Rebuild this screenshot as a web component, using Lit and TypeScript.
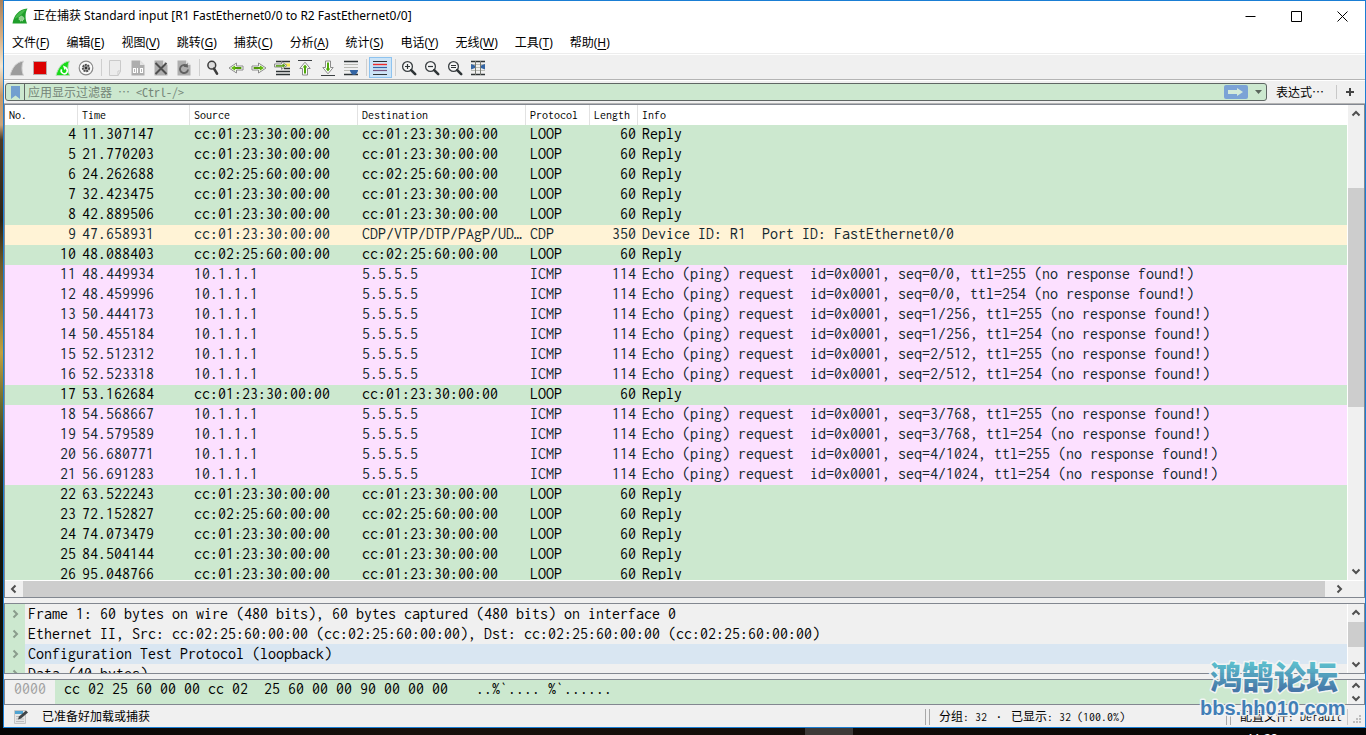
import { LitElement, html, svg, css, nothing } from "lit";

type Kind = "loop" | "cdp" | "icmp";
interface Packet {
  no: number;
  time: string;
  src: string;
  dst: string;
  proto: string;
  len: number;
  info: string;
  kind: Kind;
}

const R1 = "cc:01:23:30:00:00";
const R2 = "cc:02:25:60:00:00";

const loop = (no: number, time: string, mac: string): Packet => ({
  no, time, src: mac, dst: mac, proto: "LOOP", len: 60, info: "Reply", kind: "loop",
});
const ping = (no: number, time: string, seq: string, ttl: number): Packet => ({
  no, time, src: "10.1.1.1", dst: "5.5.5.5", proto: "ICMP", len: 114,
  info: `Echo (ping) request  id=0x0001, seq=${seq}, ttl=${ttl} (no response found!)`, kind: "icmp",
});

const PACKETS: Packet[] = [
  loop(4, "11.307147", R1),
  loop(5, "21.770203", R1),
  loop(6, "24.262688", R2),
  loop(7, "32.423475", R1),
  loop(8, "42.889506", R1),
  { no: 9, time: "47.658931", src: R1, dst: "CDP/VTP/DTP/PAgP/UDLD", proto: "CDP", len: 350, info: "Device ID: R1  Port ID: FastEthernet0/0", kind: "cdp" },
  loop(10, "48.088403", R2),
  ping(11, "48.449934", "0/0", 255),
  ping(12, "48.459996", "0/0", 254),
  ping(13, "50.444173", "1/256", 255),
  ping(14, "50.455184", "1/256", 254),
  ping(15, "52.512312", "2/512", 255),
  ping(16, "52.523318", "2/512", 254),
  loop(17, "53.162684", R1),
  ping(18, "54.568667", "3/768", 255),
  ping(19, "54.579589", "3/768", 254),
  ping(20, "56.680771", "4/1024", 255),
  ping(21, "56.691283", "4/1024", 254),
  loop(22, "63.522243", R1),
  loop(23, "72.152827", R2),
  loop(24, "74.073479", R1),
  loop(25, "84.504144", R1),
  loop(26, "95.048766", R1),
];

const DETAILS = [
  { text: "Frame 1: 60 bytes on wire (480 bits), 60 bytes captured (480 bits) on interface 0", selected: false },
  { text: "Ethernet II, Src: cc:02:25:60:00:00 (cc:02:25:60:00:00), Dst: cc:02:25:60:00:00 (cc:02:25:60:00:00)", selected: false },
  { text: "Configuration Test Protocol (loopback)", selected: true },
  { text: "Data (40 bytes)", selected: false },
];

const MENUS: [string, string][] = [
  ["文件", "F"], ["编辑", "E"], ["视图", "V"], ["跳转", "G"], ["捕获", "C"], ["分析", "A"],
  ["统计", "S"], ["电话", "Y"], ["无线", "W"], ["工具", "T"], ["帮助", "H"],
];

const arrow = svg`<path d="M1 6H7.5V3L15 8L7.5 13V10H1Z" fill="#fff" stroke="#8b8b8b" stroke-linejoin="round"/><path d="M2.6 8H10" stroke="#4e9a06" stroke-width="2"/><path d="M8.8 5.2L13 8L8.8 10.8Z" fill="#62b811"/>`;
const page = svg`<path d="M1.5 .5H10L14.5 5V15.5H1.5Z" fill="#aeaeae"/><path d="M10 .5V5H14.5Z" fill="#e4e4e4"/>`;
const glass = (mark: unknown) => svg`<circle cx="6.5" cy="6.5" r="4.9" fill="#f6f6f6" stroke="#3a3f42" stroke-width="1.3"/>
  <path d="M10.2 10.2L14.2 14.2" stroke="#2e3436" stroke-width="2.6" stroke-linecap="round"/>${mark}`;

const ICONS: Record<string, unknown> = {
  start: svg`<path d="M1 15.5C3 8 7 2 14.5 1C12.5 5 12.5 11 14.5 15.5Z" fill="#9c9c9c" stroke="#d4d4d4"/>`,
  stop: svg`<rect x="1.5" y="1.5" width="13" height="13" fill="#dc0000" stroke="#b9a9a9"/>`,
  restart: svg`<path d="M1 15.5C3 8 7 2 14.5 1C12.5 5 12.5 11 14.5 15.5Z" fill="#17dc17" stroke="#b4dcb4"/>
    <path d="M10.8 8.2A3 3 0 1 1 6.6 9.4" fill="none" stroke="#fff" stroke-width="1.6"/><path d="M8 5.6L12 7.2L9.4 10Z" fill="#fff"/>`,
  options: svg`<circle cx="8" cy="8" r="6.8" fill="#fafafa" stroke="#8a8a8a" stroke-width="1.2"/><circle cx="8" cy="8" r="3.2" fill="#bbb" stroke="#4d4d4d" stroke-width="1.9" stroke-dasharray="2 .7"/><circle cx="8" cy="8" r="1.4" fill="#333"/>`,
  open: svg`<path d="M2.5 .5H13.5V11L11 15.5H2.5Z" fill="#ececec" stroke="#cacaca"/><path d="M13.5 11H11V15.5Z" fill="#fff" stroke="#cacaca"/>`,
  save: svg`${page}<path d="M3.5 8.5H5.5V12.5H3.5ZM7.5 8V13M10.5 8.5H12.5V12.5H10.5Z" fill="none" stroke="#fff" stroke-width="1.1"/>`,
  close: svg`${page}<path d="M2.5 3L13.5 14M13.5 3L2.5 14" stroke="#4e4e4e" stroke-width="2"/>`,
  reload: svg`${page}<path d="M10.6 6A4 4 0 1 0 12 9.5" fill="none" stroke="#626262" stroke-width="1.9"/><path d="M7.5 6.8L12 7.6L11.6 3Z" fill="#626262"/>`,
  find: svg`<circle cx="6.8" cy="5.2" r="3.9" fill="#dcdcdc" stroke="#3c3c3c" stroke-width="1.5"/><path d="M9 8.6L12 13.6" stroke="#3c3c3c" stroke-width="2.6" stroke-linecap="round"/>`,
  back: svg`<g transform="matrix(-1 0 0 1 16 0)">${arrow}</g>`,
  forward: arrow,
  goto: svg`<path d="M2 1.5H16M2 11.5H16M2 14.5H16M10 8.5H16" stroke="#2e3436" stroke-width="1.3"/><path d="M10 3.5H16V6.5H10Z" fill="#fce94f"/>
    <path d="M.5 4H7.5V1.6L13 5.5L7.5 9.4V7H.5Z" fill="#fff" stroke="#8b8b8b"/><path d="M2 5.5H8.8V4L11.2 5.5L8.8 7.2V6.3H2Z" fill="#4e9a06" stroke="#4e9a06" stroke-width=".6"/>`,
  first: svg`<path d="M1 .5H15" stroke="#3a3f42"/><path d="M5.5 15V8.5H2.8L8 2.2L13.2 8.5H10.5V15Z" fill="#fff" stroke="#8b8b8b"/><path d="M7 13.5V7.4H5.6L8 4.4L10.4 7.4H9V13.5Z" fill="#4fa80a"/>`,
  last: svg`<path d="M1 15.5H15" stroke="#3a3f42"/><path d="M5.5 1V7.5H2.8L8 13.8L13.2 7.5H10.5V1Z" fill="#fff" stroke="#8b8b8b"/><path d="M7 2.5V8.6H5.6L8 11.6L10.4 8.6H9V2.5Z" fill="#4fa80a"/>`,
  autoscroll: svg`<path d="M1 1.5H15M1 14.5H15" stroke="#2e3436" stroke-width="1.3"/><path d="M1 4.5H15M1 7.5H15M1 10.5H9" stroke="#b9bab4"/><path d="M7 10H15C15 12.5 13 14.8 11 14.8S7 12.5 7 10Z" fill="#3465a4"/>`,
  colorize: svg`<path d="M1 1.5H15M1 14.5H15" stroke="#2e3436" stroke-width="1.2"/><path d="M1 4.5H15" stroke="#ef2929" stroke-width="1.4"/><path d="M1 7.5H15" stroke="#3465a4" stroke-width="1.2"/><path d="M1 10.5H15" stroke="#75507b" stroke-width="1.2"/>`,
  zoomIn: glass(svg`<path d="M4 6.5H9M6.5 4V9" stroke="#2e3436" stroke-width="1.2"/>`),
  zoomOut: glass(svg`<path d="M4 6.5H9" stroke="#2e3436" stroke-width="1.2"/>`),
  zoomReset: glass(svg`<path d="M4 5.5H9M4 7.5H9" stroke="#2e3436"/>`),
  resize: svg`<path d="M1 1.5H15M1 14.5H15" stroke="#2e3436" stroke-width="1.3"/><path d="M1 7.5H15M1 10.5H15M1 4.5H15" stroke="#babdb6"/><path d="M5.5 1V15M10.5 1V15" stroke="#777972"/><path d="M1 4V9.5L5 8V5.5ZM15 4V9.5L11 8V5.5Z" fill="#3465a4"/>`,
};

const TOOLBAR: [string, string][][] = [
  [["start", "开始捕获"], ["stop", "停止捕获"], ["restart", "重新开始"], ["options", "捕获选项"]],
  [["open", "打开"], ["save", "保存"], ["close", "关闭"], ["reload", "重新加载"]],
  [["find", "查找"], ["back", "后退"], ["forward", "前进"], ["goto", "转到分组"], ["first", "首个分组"], ["last", "最新分组"], ["autoscroll", "自动滚动"]],
  [["colorize", "着色"]],
  [["zoomIn", "放大"], ["zoomOut", "缩小"], ["zoomReset", "普通大小"], ["resize", "调整列宽"]],
];

const CHEVRONS: Record<string, string> = {
  up: "M1.5 6.5L5 3L8.5 6.5",
  down: "M1.5 3.5L5 7L8.5 3.5",
  left: "M6.5 1.5L3 5L6.5 8.5",
  right: "M3.5 1.5L7 5L3.5 8.5",
};
const chevron = (dir: string) => html`<svg class="chevron" viewBox="0 0 10 10" aria-hidden="true"><path d=${CHEVRONS[dir]}></path></svg>`;

class ScrollTrack extends LitElement {
  static properties = {
    horizontal: { type: Boolean, reflect: true },
    before: { type: Number },
    thumb: { type: Number },
    after: { type: Number },
  };
  declare horizontal: boolean;
  declare before: number;
  declare thumb: number;
  declare after: number;

  static styles = css`
    :host { display: flex; flex-direction: column; width: 16px; background: #f0f0f0; }
    :host([horizontal]) { flex-direction: row; width: auto; height: 16px; }
    button { flex: 0 1 18px; min-height: 0; min-width: 0; padding: 0; border: 0; background: none; display: flex; align-items: center; justify-content: center; overflow: hidden; }
    .thumb { background: #cdcdcd; min-height: 0; }
    .chevron { width: 10px; height: 10px; flex: none; }
    .chevron path { fill: none; stroke: #505050; stroke-width: 2; }
  `;

  render() {
    return html`
      <button aria-label=${this.horizontal ? "向左" : "向上"}>${chevron(this.horizontal ? "left" : "up")}</button>
      <div style="flex:${this.before} 1 0"></div>
      <div class="thumb" style="flex:${this.thumb} 1 0"></div>
      <div style="flex:${this.after} 1 0"></div>
      <button aria-label=${this.horizontal ? "向右" : "向下"}>${chevron(this.horizontal ? "right" : "down")}</button>
    `;
  }
}
customElements.define("scroll-track", ScrollTrack);

class AppRoot extends LitElement {
  static styles = css`
    :host {
      --mono: Inconsolata, "Noto Sans Mono CJK SC", "Liberation Mono", monospace;
      --ui: "Noto Sans", "Noto Sans CJK SC", sans-serif;
      --fixed: Inconsolata, "Noto Sans CJK SC", sans-serif;
      --green: #cce8cf;
      --line: #828790;
      display: block;
      height: 100vh;
      overflow: hidden;
      font: 12px/16px var(--ui);
      color: #000;
    }
    * { box-sizing: border-box; }
    button { font: inherit; color: inherit; border: 0; padding: 0; background: none; }
    svg { display: block; }

    .desktop {
      position: relative;
      height: 100%;
      display: flex;
      flex-direction: column;
      padding-left: 3px;
      background: linear-gradient(#a9805a, #d9b184 5%, #f3e6d2 9%, #c4986a 13%, #c9a57d 17%, #4a3b28 19%, #2b2418 30%, #6d5a2a 36%, #8c7a35 42%, #c2a040 48%, #6b6b30 55%, #34391c 62%, #15180d 72%, #0a0a07);
    }
    .window {
      flex: 1;
      min-height: 0;
      display: flex;
      flex-direction: column;
      border: 1px solid #1a7ed4;
      background: #f0f0f0;
    }
    .taskbar { height: 7px; overflow: hidden; display: flex; margin-left: -3px; background: linear-gradient(90deg, #050505, #17110c 30%, #120d09 60%, #050505); }
    .taskbar .gap { flex: 805; }
    .taskbar .active { flex: 48; background: #3d3a38; }
    .taskbar .rest { flex: 394; }
    .taskbar .clock { flex: 119; padding-top: 3px; color: #fff; }

    .titlebar { display: flex; align-items: center; height: 30px; background: #fff; padding-left: 8px; }
    .titlebar h1 { flex: 1; margin: 0 0 0 5px; font: inherit; }
    .titlebar .logo { width: 16px; height: 16px; }
    .titlebar button { width: 46px; height: 30px; display: flex; align-items: center; justify-content: center; }
    .titlebar button svg { width: 11px; height: 11px; fill: none; stroke: #000; }

    .menubar { display: flex; gap: 17px; height: 24px; padding: 3px 8px 0; background: #fff; border-bottom: 1px solid #fff; box-shadow: inset 0 -1px #ededed; align-items: flex-start; }
    .menubar button { line-height: 18px; text-align: left; white-space: nowrap; }
    .menubar u { text-underline-offset: 2px; }

    .toolbar { display: flex; align-items: center; height: 25px; padding: 0 2px; border-bottom: 1px solid #b4b4b4; }
    .toolbar button { width: 23px; height: 21px; padding: 1px 1px 0 0; display: flex; align-items: center; justify-content: center; }
    .toolbar button.on { background: #cce4f7; box-shadow: inset 0 0 0 1px #8ec3ef; }
    .toolbar svg { width: 16px; height: 16px; overflow: visible; }
    .toolbar .sep { width: 6px; display: flex; justify-content: center; }
    .toolbar .sep::before { content: ""; width: 1px; height: 17px; background: #cfcfcf; }

    .filterbar { display: flex; align-items: center; height: 24px; padding: 0 10px 0 1px; border-top: 1px solid #fff; border-bottom: 1px solid #b4b4b4; font-family: "Noto Sans Mono CJK SC", "Noto Sans CJK SC", sans-serif; }
    .field { flex: 1; display: flex; align-items: center; height: 18px; border: 1px solid #5f6664; border-radius: 3px; background: var(--green); overflow: hidden; }
    .field .mark { width: 19px; height: 16px; display: flex; align-items: center; justify-content: center; border-right: 1px solid #5f6664; }
    .field input { flex: 1; min-width: 0; height: 16px; padding: 0 3px; border: 0; outline: 0; background: none; font: inherit; color: #000; }
    .field input::placeholder { color: #748577; opacity: 1; }
    .field .apply { width: 24px; height: 14px; border-radius: 2px; background: #7ba3d6; display: flex; align-items: center; justify-content: center; }
    .field .history { width: 18px; height: 16px; display: flex; align-items: center; justify-content: center; padding-left: 4px; }
    .expr { margin-left: 9px; }
    .bar { width: 1px; height: 14px; background: #c8c8c8; margin: 0 8px 0 12px; }

    .pane { border: 1px solid var(--line); background: #f0f0f0; display: flex; min-height: 0; }
    .pane .body { flex: 1; min-width: 0; min-height: 0; overflow: hidden; border-right: 1px solid #fff; }
    .packets { flex: 1; flex-direction: column; }
    .packets .top { flex: 1; display: flex; min-height: 0; }
    .packets .bottom { display: flex; border-top: 1px solid #fff; }
    .packets .bottom scroll-track { flex: 1; }
    .packets .corner { width: 16px; }
    .packets .body { background: #fff; }

    table { width: 100%; border-spacing: 0; table-layout: fixed; font: 16px/18px var(--mono); }
    th { height: 20px; padding: 0 3px 0 4px; font: 12px/20px var(--mono); text-align: left; box-shadow: inset -1px 0 #e2e2e2; }
    th:last-child { box-shadow: none; }
    td { height: 20px; padding: 0 2px 2px 4px; white-space: pre; overflow: hidden; text-overflow: ellipsis; }
    .num { text-align: right; }
    .c-no { width: 73px; } .c-time { width: 112px; } .c-addr { width: 168px; }
    .c-proto { width: 64px; } .c-len { width: 48px; }
    tr.loop { background: var(--green); }
    tr.cdp { background: #fff3d6; color: #12272e; }
    tr.icmp { background: #fce0ff; color: #12272e; }

    .details { height: 71px; margin-top: 5px; font: 16px/20px var(--mono); }
    .details ul { margin: 0; padding: 0; list-style: none; }
    .details li { display: flex; white-space: pre; }
    .details .twist { width: 20px; margin-right: 3px; background: var(--green); display: flex; align-items: center; justify-content: center; }
    .details li.sel { background: linear-gradient(90deg, var(--green) 20px, #d9e6f2 20px); }
    .details .chevron { width: 10px; height: 10px; }
    .details .chevron path { fill: none; stroke: #8a9c8c; stroke-width: 2; }

    .hex { height: 26px; margin-top: 5px; font: 16px/18px var(--mono); }
    .hex .body { display: flex; white-space: pre; background: var(--green); }
    .hex .offset { width: 50px; padding-left: 9px; background: #f0f0f0; color: #a0a0a0; }
    .hex .bytes { padding-left: 9px; }
    .hex .ascii { padding-left: 28px; }

    .status { display: flex; align-items: center; height: 22px; font-family: var(--fixed); white-space: pre; padding: 2px 0 0 10px; }
    .status .ready { flex: 1; display: flex; align-items: center; gap: 14px; }
    .status .group { padding-left: 9px; border-left: 1px solid #a8a8a8; margin-left: 3px; }
    .status .grip { height: 16px; border-left: 1px solid #a8a8a8; }
    .status .counts { width: 297px; }
    .status .profile { width: 118px; border-right: 1px solid #c8c8c8; }
    .status .dot { display: inline-block; width: 12px; text-align: center; font-weight: 700; }
    .status .size { margin: 4px 3px 0 5px; }

    .watermark { position: absolute; right: 14px; bottom: 12px; width: 156px; height: 66px; pointer-events: none; }
    .watermark .cn { font: 900 32px "Noto Sans CJK SC", sans-serif; }
    .watermark .url { font: 700 20px "Liberation Sans", sans-serif; }
  `;

  private separator() {
    return html`<span class="sep" role="separator"></span>`;
  }

  render() {
    return html`
      <div class="desktop">
        <main class="window">
          <header class="titlebar">
            <svg class="logo" viewBox="0 0 16 16" aria-hidden="true">
              <path d="M.5 15.5C1.5 8 6.5 1 15.5.5C12.8 5 13.2 11 15 15.5Z" fill="#1f9e2a"></path>
              <path d="M2.5 11C5 5.5 9 2 14 1.5C11 5 9 8 2.5 11Z" fill="#46bb4c"></path>
              <circle cx="9.4" cy="10.6" r="2.4" fill="#8fd08d" stroke="#d6f0d2" stroke-dasharray="1 .9"></circle>
            </svg>
            <h1>正在捕获 Standard input [R1 FastEthernet0/0 to R2 FastEthernet0/0]</h1>
            <button aria-label="最小化"><svg viewBox="0 0 11 11"><path d="M.5 5.5H10.5"></path></svg></button>
            <button aria-label="最大化"><svg viewBox="0 0 11 11"><path d="M.5.5H10.5V10.5H.5Z"></path></svg></button>
            <button aria-label="关闭"><svg viewBox="0 0 11 11"><path d="M.5.5L10.5 10.5M10.5.5L.5 10.5"></path></svg></button>
          </header>

          <nav class="menubar">
            ${MENUS.map(([label, key]) => html`<button>${label}(<u>${key}</u>)</button>`)}
          </nav>

          <div class="toolbar" role="toolbar">
            ${TOOLBAR.map((group, i) => html`
              ${i ? this.separator() : nothing}
              ${group.map(([id, label]) => html`
                <button class=${id === "colorize" ? "on" : ""} aria-label=${label}><svg viewBox="0 0 16 16">${ICONS[id]}</svg></button>`)}
            `)}
          </div>

          <div class="filterbar">
            <div class="field">
              <button class="mark" aria-label="书签"><svg width="9" height="13" viewBox="0 0 9 13"><path d="M0 0H9V13L4.5 9.5L0 13Z" fill="#729fcf"></path></svg></button>
              <input type="text" aria-label="显示过滤器" placeholder="应用显示过滤器 … &lt;Ctrl-/&gt;" />
              <button class="apply" aria-label="应用"><svg width="17" height="10" viewBox="0 0 17 10"><path d="M1 3H10V1L16 5L10 9V7H1Z" fill="#d4ead9"></path></svg></button>
              <button class="history" aria-label="历史"><svg width="7" height="4" viewBox="0 0 7 4"><path d="M0 0H7L3.5 4Z" fill="#5a665c"></path></svg></button>
            </div>
            <button class="expr">表达式…</button>
            <span class="bar"></span>
            <button aria-label="添加"><svg width="10" height="10" viewBox="0 0 10 10"><path d="M5 1V9M1 5H9" stroke="#444" stroke-width="2"></path></svg></button>
          </div>

          <section class="pane packets">
            <div class="top">
              <div class="body">
                <table>
                  <colgroup>
                    <col class="c-no" /><col class="c-time" /><col class="c-addr" /><col class="c-addr" />
                    <col class="c-proto" /><col class="c-len" /><col />
                  </colgroup>
                  <thead>
                    <tr><th>No.</th><th>Time</th><th>Source</th><th>Destination</th><th>Protocol</th><th>Length</th><th>Info</th></tr>
                  </thead>
                  <tbody>
                    ${PACKETS.map((p) => html`<tr class=${p.kind}><td class="num">${p.no}</td><td>${p.time}</td><td>${p.src}</td><td>${p.dst}</td><td>${p.proto}</td><td class="num">${p.len}</td><td>${p.info}</td></tr>`)}
                  </tbody>
                </table>
              </div>
              <scroll-track .before=${65} .thumb=${220} .after=${155}></scroll-track>
            </div>
            <div class="bottom">
              <scroll-track horizontal .before=${0} .thumb=${1303} .after=${5}></scroll-track>
              <span class="corner"></span>
            </div>
          </section>

          <section class="pane details">
            <div class="body">
              <ul>
                ${DETAILS.map((d) => html`<li class=${d.selected ? "sel" : ""}><span class="twist">${chevron("right")}</span>${d.text}</li>`)}
              </ul>
            </div>
            <scroll-track .before=${0} .thumb=${26} .after=${8}></scroll-track>
          </section>

          <section class="pane hex">
            <div class="body"><span class="offset">0000</span><span class="bytes">cc 02 25 60 00 00 cc 02  25 60 00 00 90 00 00 00</span><span class="ascii">..%\`.... %\`......</span></div>
            <scroll-track .before=${0} .thumb=${0} .after=${0}></scroll-track>
          </section>

          <footer class="status">
            <span class="ready">
              <svg width="14" height="14" viewBox="0 0 14 14" aria-hidden="true">
                <path d="M.5.5H11.5V13.5H.5Z" fill="#e6e6e6" stroke="#c4c4c4"></path>
                <path d="M1 1H9V4H1Z" fill="#4fa3d1"></path>
                <path d="M2 6.5H9M2 9H10M2 11.5H10" stroke="#bdbdbd"></path>
                <path d="M4 9.5L5 6.5L12 .5L14 2.5L7 8.5Z" fill="#3f4447"></path>
              </svg>
              <span>已准备好加载或捕获</span>
            </span>
            <span class="grip"></span>
            <span class="group counts">分组: 32 <span class="dot">·</span> 已显示: 32 (100.0%)</span>
            <span class="grip"></span>
            <span class="group profile">配置文件: Default</span>
            <svg class="size" width="9" height="9" viewBox="0 0 9 9" aria-hidden="true"><path d="M6 0H8V2H6ZM3 3H5V5H3ZM6 3H8V5H6ZM0 6H2V8H0ZM3 6H5V8H3ZM6 6H8V8H6Z" fill="#bdbdbd"></path></svg>
          </footer>
        </main>

        <div class="taskbar"><span class="gap"></span><span class="active"></span><span class="rest"></span><span class="clock">11:28</span></div>

        <svg class="watermark" viewBox="0 0 156 66">
          <defs>
            <linearGradient id="wm" x1="0" y1="0" x2="0" y2="1">
              <stop offset=".25" stop-color="#55bccb"></stop><stop offset=".85" stop-color="#3f6fa5"></stop>
            </linearGradient>
          </defs>
          <g stroke="#f4f6f6" stroke-width="3" stroke-linejoin="round" paint-order="stroke" opacity=".95">
            <text class="cn" x="14" y="32" fill="url(#wm)">鸿鹄论坛</text>
            <text class="url" x="4" y="58" fill="#3a7ab5">bbs.hh010.com</text>
          </g>
        </svg>
      </div>
    `;
  }
}
customElements.define("app-root", AppRoot);
